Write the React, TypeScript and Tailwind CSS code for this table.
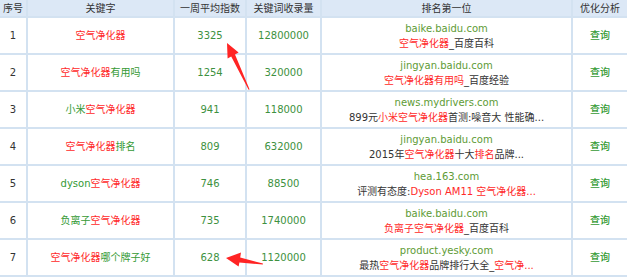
import React from "react";

const R = ({ children }: { children: React.ReactNode }) => (
  <span className="text-[#ff2a2a]">{children}</span>
);
const G = ({ children }: { children: React.ReactNode }) => (
  <span className="text-[#349a34]">{children}</span>
);

type Row = {
  kw: React.ReactNode;
  idx: string;
  cnt: string;
  url: string;
  title: React.ReactNode;
};

const rows: Row[] = [
  {
    kw: <R>空气净化器</R>,
    idx: "3325",
    cnt: "12800000",
    url: "baike.baidu.com",
    title: (
      <>
        <R>空气净化器</R>_百度百科
      </>
    ),
  },
  {
    kw: (
      <>
        <R>空气净化器</R>
        <G>有用吗</G>
      </>
    ),
    idx: "1254",
    cnt: "320000",
    url: "jingyan.baidu.com",
    title: (
      <>
        <R>空气净化器有用吗</R>_百度经验
      </>
    ),
  },
  {
    kw: (
      <>
        <G>小米</G>
        <R>空气净化器</R>
      </>
    ),
    idx: "941",
    cnt: "118000",
    url: "news.mydrivers.com",
    title: (
      <>
        899元<R>小米空气净化器</R>首测:噪音大 性能确...
      </>
    ),
  },
  {
    kw: (
      <>
        <R>空气净化器</R>
        <G>排名</G>
      </>
    ),
    idx: "809",
    cnt: "632000",
    url: "jingyan.baidu.com",
    title: (
      <>
        2015年<R>空气净化器</R>十大<R>排名</R>品牌...
      </>
    ),
  },
  {
    kw: (
      <>
        <G>dyson</G>
        <R>空气净化器</R>
      </>
    ),
    idx: "746",
    cnt: "88500",
    url: "hea.163.com",
    title: (
      <>
        评测有态度:<R>Dyson AM11 空气净化器...</R>
      </>
    ),
  },
  {
    kw: (
      <>
        <G>负离子</G>
        <R>空气净化器</R>
      </>
    ),
    idx: "735",
    cnt: "1740000",
    url: "baike.baidu.com",
    title: (
      <>
        <R>负离子空气净化器</R>_百度百科
      </>
    ),
  },
  {
    kw: (
      <>
        <R>空气净化器</R>
        <G>哪个牌子好</G>
      </>
    ),
    idx: "628",
    cnt: "1120000",
    url: "product.yesky.com",
    title: (
      <>
        最热<R>空气净化器</R>品牌排行大全_<R>空气净...</R>
      </>
    ),
  },
];

const bd = "border-[#d3e2f1]";

export default function App() {
  return (
    <div
      className="relative w-[627px] h-[277px] bg-white overflow-hidden text-[10px] text-[#333]"
      style={{ fontFamily: '"DejaVu Sans", "Noto Sans CJK SC", sans-serif' }}
    >
      <table className="table-fixed border-collapse w-[627px]">
        <colgroup>
          <col className="w-[27px]" />
          <col className="w-[147px]" />
          <col className="w-[72px]" />
          <col className="w-[75px]" />
          <col className="w-[251px]" />
          <col className="w-[55px]" />
        </colgroup>
        <thead>
          <tr className="h-[17px] bg-[#dce8f6]">
            {["序号", "关键字", "一周平均指数", "关键词收录量", "排名第一位", "优化分析"].map(
              (h, i) => (
                <th
                  key={h}
                  className={`p-0 font-normal text-center leading-[15px] border-b-2 ${bd} ${
                    i < 5 ? `border-r-2` : ""
                  }`}
                >
                  {h}
                </th>
              )
            )}
          </tr>
        </thead>
        <tbody>
          {rows.map((r, i) => (
            <tr key={i} className="h-[37px]">
              <td className={`p-0 text-center border-r-2 border-b-2 ${bd}`}>{i + 1}</td>
              <td className={`p-0 text-center border-r-2 border-b-2 ${bd}`}>{r.kw}</td>
              <td className={`p-0 text-center border-r-2 border-b-2 ${bd} text-[#3d9140]`}>
                {r.idx}
              </td>
              <td className={`p-0 text-center border-r-2 border-b-2 ${bd} text-[#3d9140]`}>
                {r.cnt}
              </td>
              <td className={`p-0 text-center border-r-2 border-b-2 ${bd} leading-[15px]`}>
                <div className="text-[#5e9b35]">{r.url}</div>
                <div>{r.title}</div>
              </td>
              <td className={`p-0 text-center border-b-2 ${bd} text-[#349a34] font-medium`}>
                查询
              </td>
            </tr>
          ))}
        </tbody>
      </table>
      <svg
        className="absolute left-0 top-0 pointer-events-none"
        width="627"
        height="277"
        viewBox="0 0 627 277"
      >
        <polygon
          fill="#ff2424"
          points="227,43 238.6,52.6 235,54.6 249.6,89.5 248.6,89.8 231.2,56.6 227.6,58.6"
        />
        <polygon
          fill="#ff2424"
          points="226,258 241,252.5 240.2,257.6 263,263.5 262.8,264.6 239.4,262.4 238.6,266.5"
        />
      </svg>
    </div>
  );
}
